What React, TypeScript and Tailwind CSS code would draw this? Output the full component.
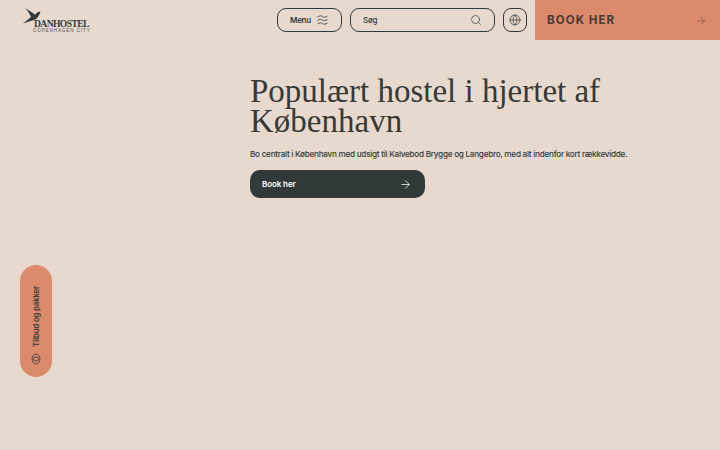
import { Search, Globe, ArrowRight } from "lucide-react";

function Logo() {
    return (
        <div className="relative w-[70px] h-[34px] mt-[7px] ml-[22px] shrink-0">
            <svg className="absolute left-0 top-0" width="20" height="18" viewBox="22 7 20 18" fill="#33393a">
                <path d="M25 8 L33 13 C34 14 35 15 36 14 C37 12.5 38 11 40.5 12 C39 16 37 19 34 20 C31 21 27 22 23 23.5 C26 21 29 19 31 17 C30 15 29 12 25 8 Z" />
            </svg>
            <span className="absolute left-[12px] top-[11px] font-['Liberation_Serif',serif] text-[9.6px] leading-[12px] text-[#33393a] tracking-[-0.6px] font-bold">
                DANHOSTEL
            </span>
            <span className="absolute left-[11px] top-[21px] font-['Liberation_Sans',sans-serif] text-[4.5px] leading-[6px] tracking-[0.95px] text-[#4a4f4f] whitespace-nowrap">
                COPENHAGEN CITY
            </span>
        </div>
    );
}

function MenuWaves() {
    return (
        <svg width="11" height="10" viewBox="0 0 11 10" fill="none" stroke="#33393a" strokeWidth="0.8">
            <path d="M0.5 2 C2.5 0.5 4.5 0.5 5.5 1.5 C6.5 2.5 8.5 2.5 10.5 1" />
            <path d="M0.5 5.5 C2.5 4 4.5 4 5.5 5 C6.5 6 8.5 6 10.5 4.5" />
            <path d="M0.5 9 C2.5 7.5 4.5 7.5 5.5 8.5 C6.5 9.5 8.5 9.5 10.5 8" />
        </svg>
    );
}

export default function App() {
    return (
        <div className="relative w-[720px] h-[450px] overflow-hidden bg-[#e7d9ce] font-['Inter',sans-serif] text-[#33393a]">
            <header className="flex items-start h-[40px]">
                <Logo />
                <div className="flex items-center gap-2 ml-auto mt-2">
                    <button className="flex items-center justify-between w-[65px] h-[24px] pl-[12px] pr-[13px] rounded-[9px] border-[1.2px] border-[#33393a] text-[8px] tracking-[-0.25px] font-semibold">
                        Menu
                        <MenuWaves />
                    </button>
                    <div className="flex items-center justify-between w-[145px] h-[24px] pl-[12px] pr-[12px] rounded-[9px] border-[1.2px] border-[#33393a] text-[8px] tracking-[-0.2px] font-medium">
                        Søg
                        <Search className="w-[12px] h-[12px]" strokeWidth={1.3} />
                    </div>
                    <button className="flex items-center justify-center w-[24px] h-[24px] rounded-[8px] border-[1.2px] border-[#33393a]">
                        <Globe className="w-[12px] h-[12px]" strokeWidth={1.4} />
                    </button>
                </div>
                <a className="flex items-center justify-between w-[185px] h-[40px] ml-2 pl-3 pr-[13px] pt-[1px] bg-[#db8a6c] text-[11.5px] font-bold tracking-[1.1px] text-[#4a3a32]">
                    BOOK HER
                    <ArrowRight className="w-[12px] h-[12px] text-[#7a4a3a]" strokeWidth={1.3} />
                </a>
            </header>

            <main className="ml-[250px] mt-[36px] w-[400px]">
                <h1 className="font-['Liberation_Serif',serif] text-[33px] leading-[30px] text-[#373a36]">
                    Populært hostel i hjertet af København
                </h1>
                <p className="mt-[12px] text-[8.2px] tracking-[-0.28px] leading-[12px] font-medium whitespace-nowrap">
                    Bo centralt i København med udsigt til Kalvebod Brygge og Langebro, med alt indenfor kort rækkevidde.
                </p>
                <button className="flex items-center justify-between w-[175px] h-[28px] mt-[10px] pl-[12px] pr-[13px] rounded-[10px] bg-[#323a39] text-white text-[8px] tracking-[-0.1px] font-semibold">
                    Book her
                    <ArrowRight className="w-[13px] h-[13px]" strokeWidth={1.4} />
                </button>
            </main>

            <aside className="absolute left-[20px] top-[265px] flex flex-col items-center justify-between w-[32px] h-[112px] pt-[21px] pb-[12px] rounded-full bg-[#db8a6c]">
                <span className="[writing-mode:vertical-rl] rotate-180 ml-[1px] text-[7.8px] tracking-[-0.15px] font-semibold whitespace-nowrap">
                    Tilbud og pakker
                </span>
                <svg width="10" height="12" viewBox="0 0 10 12" fill="none" stroke="#33393a" strokeWidth="0.8">
                    <ellipse cx="5" cy="6" rx="4" ry="5" />
                    <ellipse cx="5" cy="6" rx="2.6" ry="2" />
                </svg>
            </aside>
        </div>
    );
}
